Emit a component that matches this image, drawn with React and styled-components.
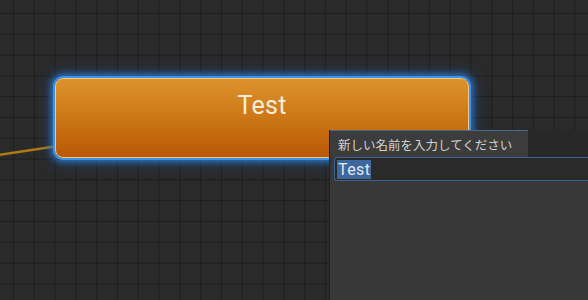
import React from 'react';
import styled, { createGlobalStyle } from 'styled-components';

const GlobalStyle = createGlobalStyle`
    html, body {
        margin: 0;
        padding: 0;
        width: 100%;
        height: 100%;
        overflow: hidden;
        background: #282828;
    }
    #root {
        height: 100%;
    }
`;

// graph canvas with the grid
const Canvas = styled.div`
    position: relative;
    width: 588px;
    height: 300px;
    overflow: hidden;
    background-color: #2a2a2a;
    background-image:
        linear-gradient(to right, #1e1e1e 1px, transparent 1px),
        linear-gradient(to bottom, #1e1e1e 1px, transparent 1px);
    background-size: 20.8px 20.8px;
    background-position: 13px 13px;
`;

const Wires = styled.svg`
    position: absolute;
    left: 0;
    top: 0;
    width: 588px;
    height: 300px;
`;

const Node = styled.div`
    position: absolute;
    left: ${p => p.x}px;
    top: ${p => p.y}px;
    width: ${p => p.w}px;
    height: ${p => p.h}px;
    box-sizing: border-box;
    border-radius: 8px;
    border: 1px solid #f3c98a;
    background: linear-gradient(to bottom, #dc922c 0%, #cc7716 50%, #b95806 100%);
    box-shadow:
        0 0 0 2px #3f93e6,
        0 0 6px 4px rgba(48, 130, 220, 0.8),
        0 0 14px 7px rgba(30, 90, 170, 0.35);
    display: flex;
    align-items: flex-start;
    justify-content: center;
`;

const NodeTitle = styled.span`
    margin-top: 12px;
    font-family: Roboto, "Noto Sans", sans-serif;
    font-size: 25px;
    letter-spacing: 0.3px;
    color: #f8ecda;
`;

// rename popup
const Popup = styled.div`
    position: absolute;
    left: 330px;
    top: 130px;
    width: 262px;
    height: 176px;
    background: #383838;
    display: flex;
    flex-direction: column;
    box-shadow: -1px 0 0 #222;
`;

const TabBar = styled.div`
    display: flex;
    height: 27px;
    background: #282828;
`;

const Tab = styled.div`
    width: 198px;
    box-sizing: border-box;
    border-top: 1px solid #48698f;
    background: #3c3c3c;
    padding: 4px 0 0 8px;
    font-family: Roboto, "Noto Sans CJK JP", sans-serif;
    font-size: 12.5px;
    color: #d2d2d2;
    white-space: nowrap;
`;

const InputRow = styled.div`
    padding: 0 0 0 4px;
`;

const NameInput = styled.div`
    height: 24px;
    box-sizing: border-box;
    border: 1px solid #3b6393;
    border-right: none;
    border-radius: 3px 0 0 3px;
    background: #2a2a2a;
    display: flex;
    align-items: center;
    padding-left: 2px;
`;

const Selected = styled.span`
    background: #3e679f;
    color: #e4e8ee;
    font-family: Roboto, "Noto Sans", sans-serif;
    font-size: 16px;
    letter-spacing: 0.4px;
    line-height: 19px;
    padding: 0 1px;
`;

const App = () => {
    return (
        <>
            <GlobalStyle />
            <Canvas>
                <Wires viewBox="0 0 588 300">
                    <line x1="-2" y1="155" x2="58" y2="146" stroke="#ad7a18" strokeWidth="2.6" />
                </Wires>
                <Node x={55} y={78} w={414} h={80}>
                    <NodeTitle>Test</NodeTitle>
                </Node>
                <Popup>
                    <TabBar>
                        <Tab>新しい名前を入力してください</Tab>
                    </TabBar>
                    <InputRow>
                        <NameInput>
                            <Selected>Test</Selected>
                        </NameInput>
                    </InputRow>
                </Popup>
            </Canvas>
        </>
    );
};

export default App;
